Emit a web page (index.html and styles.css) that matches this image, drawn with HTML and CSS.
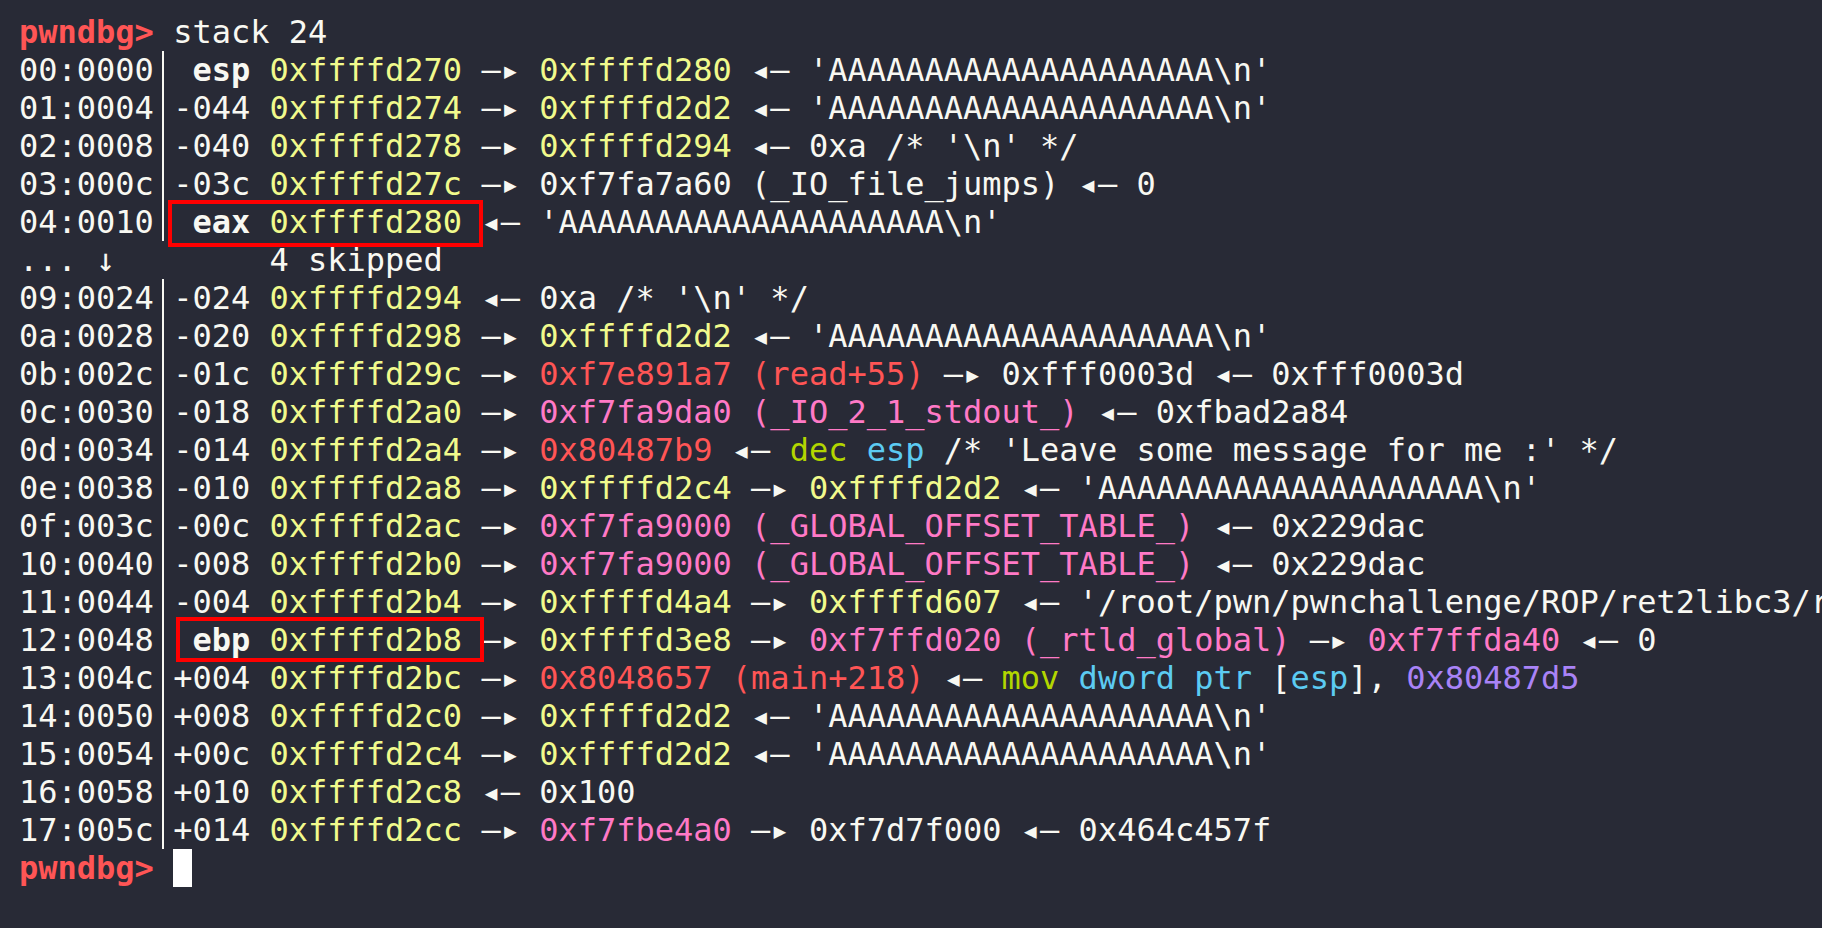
FILE: index.html
```html
<!DOCTYPE html>
<html>
<head>
<meta charset="utf-8">
<link rel="stylesheet" href="styles.css">
</head>
<body>
<div class="term">
<div class="ln"><span class="prompt">pwndbg&gt;</span> stack 24</div>
<div class="ln">00:0000<span class="bar"></span> <span class="b">esp</span> <span class="y">0xffffd270</span> —▸ <span class="y">0xffffd280</span> ◂— 'AAAAAAAAAAAAAAAAAAAA\n'</div>
<div class="ln">01:0004<span class="bar"></span>-044 <span class="y">0xffffd274</span> —▸ <span class="y">0xffffd2d2</span> ◂— 'AAAAAAAAAAAAAAAAAAAA\n'</div>
<div class="ln">02:0008<span class="bar"></span>-040 <span class="y">0xffffd278</span> —▸ <span class="y">0xffffd294</span> ◂— 0xa /* '\n' */</div>
<div class="ln">03:000c<span class="bar"></span>-03c <span class="y">0xffffd27c</span> —▸ 0xf7fa7a60 (_IO_file_jumps) ◂— 0</div>
<div class="ln">04:0010<span class="bar"></span> <span class="b">eax</span> <span class="y">0xffffd280</span> ◂— 'AAAAAAAAAAAAAAAAAAAA\n'</div>
<div class="ln">... ↓        4 skipped</div>
<div class="ln">09:0024<span class="bar"></span>-024 <span class="y">0xffffd294</span> ◂— 0xa /* '\n' */</div>
<div class="ln">0a:0028<span class="bar"></span>-020 <span class="y">0xffffd298</span> —▸ <span class="y">0xffffd2d2</span> ◂— 'AAAAAAAAAAAAAAAAAAAA\n'</div>
<div class="ln">0b:002c<span class="bar"></span>-01c <span class="y">0xffffd29c</span> —▸ <span class="r">0xf7e891a7 (read+55)</span> —▸ 0xfff0003d ◂— 0xfff0003d</div>
<div class="ln">0c:0030<span class="bar"></span>-018 <span class="y">0xffffd2a0</span> —▸ <span class="p">0xf7fa9da0 (_IO_2_1_stdout_)</span> ◂— 0xfbad2a84</div>
<div class="ln">0d:0034<span class="bar"></span>-014 <span class="y">0xffffd2a4</span> —▸ <span class="r">0x80487b9</span> ◂— <span class="g">dec</span> <span class="c">esp</span> /* 'Leave some message for me :' */</div>
<div class="ln">0e:0038<span class="bar"></span>-010 <span class="y">0xffffd2a8</span> —▸ <span class="y">0xffffd2c4</span> —▸ <span class="y">0xffffd2d2</span> ◂— 'AAAAAAAAAAAAAAAAAAAA\n'</div>
<div class="ln">0f:003c<span class="bar"></span>-00c <span class="y">0xffffd2ac</span> —▸ <span class="p">0xf7fa9000 (_GLOBAL_OFFSET_TABLE_)</span> ◂— 0x229dac</div>
<div class="ln">10:0040<span class="bar"></span>-008 <span class="y">0xffffd2b0</span> —▸ <span class="p">0xf7fa9000 (_GLOBAL_OFFSET_TABLE_)</span> ◂— 0x229dac</div>
<div class="ln">11:0044<span class="bar"></span>-004 <span class="y">0xffffd2b4</span> —▸ <span class="y">0xffffd4a4</span> —▸ <span class="y">0xffffd607</span> ◂— '/root/pwn/pwnchallenge/ROP/ret2libc3/ret2libc3'</div>
<div class="ln">12:0048<span class="bar"></span> <span class="b">ebp</span> <span class="y">0xffffd2b8</span> —▸ <span class="y">0xffffd3e8</span> —▸ <span class="p">0xf7ffd020 (_rtld_global)</span> —▸ <span class="p">0xf7ffda40</span> ◂— 0</div>
<div class="ln">13:004c<span class="bar"></span>+004 <span class="y">0xffffd2bc</span> —▸ <span class="r">0x8048657 (main+218)</span> ◂— <span class="g">mov</span> <span class="c">dword ptr</span> [<span class="c">esp</span>], <span class="v">0x80487d5</span></div>
<div class="ln">14:0050<span class="bar"></span>+008 <span class="y">0xffffd2c0</span> —▸ <span class="y">0xffffd2d2</span> ◂— 'AAAAAAAAAAAAAAAAAAAA\n'</div>
<div class="ln">15:0054<span class="bar"></span>+00c <span class="y">0xffffd2c4</span> —▸ <span class="y">0xffffd2d2</span> ◂— 'AAAAAAAAAAAAAAAAAAAA\n'</div>
<div class="ln">16:0058<span class="bar"></span>+010 <span class="y">0xffffd2c8</span> ◂— 0x100</div>
<div class="ln">17:005c<span class="bar"></span>+014 <span class="y">0xffffd2cc</span> —▸ <span class="p">0xf7fbe4a0</span> —▸ 0xf7d7f000 ◂— 0x464c457f</div>
<div class="ln"><span class="prompt">pwndbg&gt;</span> <span class="cursor"></span></div>
<div class="mark mark-eax"></div>
<div class="mark mark-ebp"></div>
</div>
</body>
</html>
```
FILE: styles.css
```css
html, body {
  margin: 0;
  padding: 0;
  background: #282a36;
  width: 1822px;
  height: 928px;
  overflow: hidden;
}
.term {
  position: relative;
  box-sizing: border-box;
  width: 1822px;
  height: 928px;
  padding: 13px 0 0 19px;
  font-family: "DejaVu Sans Mono", "Liberation Mono", monospace;
  font-size: 32px;
  line-height: 38px;
  color: #f8f8f2;
  overflow: hidden;
}
.ln {
  height: 38px;
  white-space: pre;
}
.prompt {
  color: #ff5555;
  font-weight: bold;
}
.b { font-weight: bold; }
.y { color: #f1fa8c; }
.r { color: #ff5555; }
.p { color: #ff79c6; }
.g { color: #b3d600; }
.c { color: #5ccbf2; }
.v { color: #a983f7; }
.bar {
  display: inline-block;
  width: 1ch;
  height: 38px;
  vertical-align: top;
  background: linear-gradient(to right, transparent calc(50% - 1.5px), #f8f8f2 calc(50% - 1.5px), #f8f8f2 calc(50% + 1px), transparent calc(50% + 1px));
}
.cursor {
  display: inline-block;
  width: 1ch;
  height: 38px;
  vertical-align: top;
  background: #ffffff;
}
.mark {
  position: absolute;
  box-sizing: border-box;
  border: 4px solid #ff0000;
}
.mark-eax {
  left: 168px;
  top: 200px;
  width: 315px;
  height: 47px;
}
.mark-ebp {
  left: 176px;
  top: 617px;
  width: 308px;
  height: 45px;
}
```
